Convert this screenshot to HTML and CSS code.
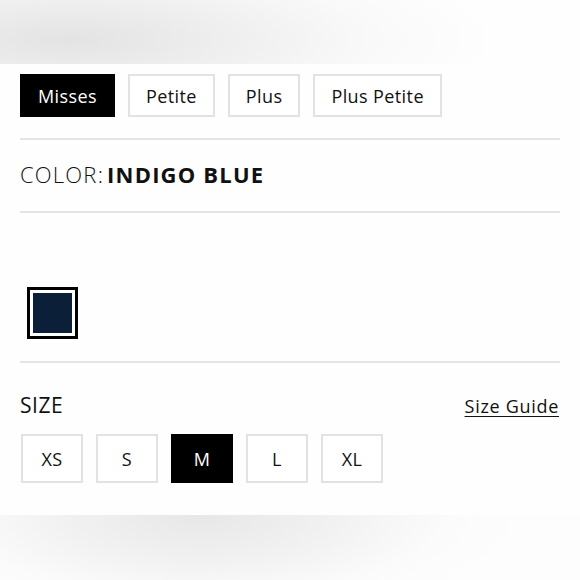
FILE: index.html
```html
<!DOCTYPE html>
<html lang="en">
<head>
<title>Product Options</title>
<meta charset="utf-8">
<meta name="viewport" content="width=device-width, initial-scale=1">
<link rel="stylesheet" href="styles.css">
</head>
<body>

<div class="shade shade-top"></div>

<section class="options">

  <div class="fit-list">
    <button class="fit active">Misses</button>
    <button class="fit">Petite</button>
    <button class="fit">Plus</button>
    <button class="fit">Plus Petite</button>
  </div>

  <hr class="rule rule-first">

  <h3 class="color-label">COLOR:<b>INDIGO BLUE</b></h3>

  <hr class="rule">

  <div class="swatches">
    <span class="swatch selected"><span class="chip"></span></span>
  </div>

  <hr class="rule">

  <div class="size-head">
    <h3 class="size-label">SIZE</h3>
    <a class="size-guide" href="#">Size Guide</a>
  </div>

  <div class="size-list">
    <button class="size">XS</button>
    <button class="size">S</button>
    <button class="size active">M</button>
    <button class="size">L</button>
    <button class="size">XL</button>
  </div>

</section>

<div class="shade shade-bottom"></div>

</body>
</html>
```

FILE: styles.css
```css
* {
  box-sizing: border-box;
}

body {
  margin: 0;
  background: #fefefe;
  color: #111;
  font-family: "Open Sans", "Noto Sans", Arial, sans-serif;
}

/* blurred bands above and below the panel */
.shade {
  height: 64px;
}

.shade-top {
  background: radial-gradient(ellipse 430px 100px at 70px 40px, #e3e3e3 0%, #eeeeee 35%, #f9f9f9 70%, #fefefe 100%);
}

.shade-bottom {
  height: 65px;
  margin-top: 32px;
  background: radial-gradient(ellipse 330px 110px at 200px 0px, #e7e7e7 0%, #f1f1f1 40%, #fbfbfb 75%, #fdfdfd 100%);
}

.options {
  padding: 10px 20px 0 20px;
}

/* fit type buttons */
.fit-list {
  display: flex;
  gap: 13px;
}

.fit {
  height: 43px;
  padding: 0 16px;
  border: 2px solid #e2e2e2;
  background: #fff;
  color: #111;
  font-family: inherit;
  font-size: 18px;
  letter-spacing: 0.4px;
}

.fit.active,
.size.active {
  background: #000;
  border-color: #000;
  color: #fff;
}

.rule {
  border: 0;
  border-top: 2px solid #e4e4e4;
  margin: 0;
}

.rule-first {
  margin-top: 21px;
}

.color-label {
  margin: 0;
  padding: 22px 0 25px 0;
  font-size: 22px;
  font-weight: 300;
  line-height: 24px;
  letter-spacing: 1.2px;
}

.color-label b {
  margin-left: 3px;
  font-weight: 700;
}

.swatches {
  padding: 74px 0 22px 7px;
}

.swatch {
  display: block;
  width: 51px;
  height: 52px;
  padding: 3px;
  border: 3px solid #000;
  background: #fff;
}

.chip {
  display: block;
  height: 100%;
  background: #0b1f38;
}

.size-head {
  display: flex;
  justify-content: space-between;
  align-items: baseline;
  padding-top: 30px;
}

.size-label {
  margin: 0;
  font-size: 21px;
  font-weight: 400;
  line-height: 24px;
  letter-spacing: 0.5px;
}

.size-guide {
  margin-right: 1px;
  color: #111;
  font-size: 18px;
  letter-spacing: 0.7px;
  text-decoration: underline;
  text-underline-offset: 3px;
}

.size-list {
  display: flex;
  gap: 13px;
  margin-top: 16px;
  padding-left: 1px;
}

.size {
  width: 62px;
  height: 49px;
  border: 2px solid #e2e2e2;
  background: #fff;
  color: #111;
  font-family: inherit;
  font-size: 18px;
  letter-spacing: 0.4px;
}
```
